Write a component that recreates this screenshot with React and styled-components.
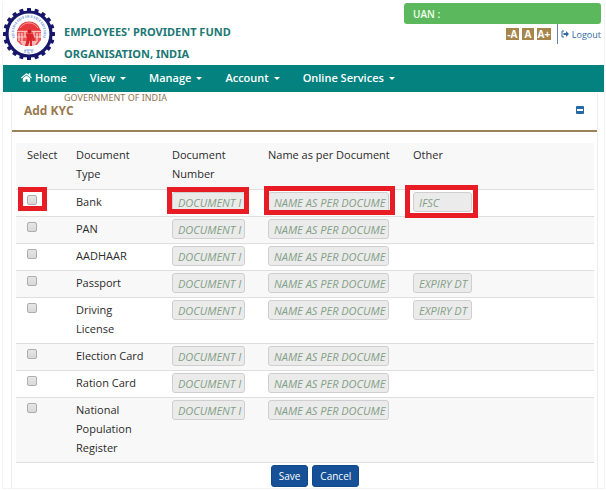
import React from "react";
import styled, { createGlobalStyle, css } from "styled-components";
import { FaHome } from "react-icons/fa";

const GlobalStyle = createGlobalStyle`
  * { box-sizing: border-box; }
  body {
    margin: 0;
    background: #fff;
    color: #2b2b2b;
    font-family: "Open Sans", "Noto Sans", sans-serif;
    font-size: 11px;
    line-height: 19px;
  }
  input, button { font-family: inherit; }
`;

const Page = styled.div`
  margin: 2px 1px 2px 2px;
  border: 1px solid #f3f3f3;
  border-top: 0;
`;

const Header = styled.header`
  display: flex;
  justify-content: space-between;
  height: 63px;
`;

const Brand = styled.div`
  display: flex;
  gap: 9px;
`;

const Emblem = styled.svg`
  width: 52px;
  height: 54px;
  margin-top: 5px;
`;

const BrandName = styled.h1`
  margin: 19px 0 0;
  width: 190px;
  color: #1c7874;
  font-family: "Noto Sans", sans-serif;
  font-size: 11px;
  font-weight: 700;
  line-height: 22px;
`;

const Session = styled.div`
  display: flex;
  flex-direction: column;
  width: 197px;
  margin: 1px 3px 0 0;
`;

const Uan = styled.div`
  height: 21px;
  padding: 0 9px;
  border-radius: 3px;
  background: #5cb85c;
  color: #f4fff0;
  font-size: 10px;
  font-weight: 600;
  line-height: 23px;
`;

const Tools = styled.div`
  display: flex;
  justify-content: flex-end;
  align-items: center;
  gap: 3px;
  height: 20px;
`;

const SizeButton = styled.button`
  width: ${(p) => p.$width}px;
  height: 12px;
  padding: 0;
  border: 0;
  background: #a5854c;
  color: #fff;
  font-size: 10px;
  font-weight: 700;
  line-height: 12px;
`;

const Logout = styled.a`
  display: flex;
  align-items: center;
  gap: 3px;
  height: 20px;
  margin-left: 3px;
  padding-left: 3px;
  border-left: 1px solid #6c7fae;
  color: #31699f;
  font-size: 9px;
  text-decoration: none;
`;

const Nav = styled.nav`
  display: flex;
  gap: 23px;
  height: 27px;
  padding: 0 18px;
  background: #04827f;
`;

const NavLink = styled.a`
  display: flex;
  align-items: center;
  gap: ${(p) => (p.$menu ? 5 : 3)}px;
  height: 24px;
  color: #fff;
  font-size: 11px;
  font-weight: 600;
  text-decoration: none;
`;

const Caret = styled.span`
  margin-top: 3px;
  border: 3px solid transparent;
  border-top-color: #fff;
  border-bottom: 0;
`;

const Panel = styled.section`
  margin: 1px 6px 0 8px;
  padding-bottom: 1px;
  border: solid #ececec;
  border-width: 0 1px;
`;

const Government = styled.p`
  margin: 0 0 0 52px;
  color: #8f7452;
  font-family: "Noto Sans", sans-serif;
  font-size: 9px;
  line-height: 10px;
`;

const PanelHead = styled.div`
  display: flex;
  justify-content: space-between;
  height: 29px;
  padding: 0 13px 0 12px;
  border-bottom: 2px solid #9c8258;
`;

const PanelTitle = styled.h2`
  margin: 0;
  color: #9a7a50;
  font-size: 12px;
  font-weight: 700;
  line-height: 16px;
`;

const Collapse = styled.button`
  width: 8px;
  height: 8px;
  margin-top: 3px;
  padding: 3px 1px;
  border: 0;
  border-radius: 1px;
  background: linear-gradient(#fff, #fff) content-box, #2568a6;
`;

const Form = styled.form`
  position: relative;
  padding: 11px 3px 0 4px;
`;

const Table = styled.table`
  width: 100%;
  border-collapse: collapse;
  table-layout: fixed;
`;

const Column = styled.col`
  width: ${(p) => p.$width}px;
`;

const Row = styled.tr`
  border-bottom: 1px solid #dedede;
  &:nth-child(even), thead & { background: #f8f8f8; }
`;

const cell = css`
  padding: 2px 8px 5px 11px;
  font-weight: 500;
  text-align: left;
  vertical-align: top;
`;

const HeadCell = styled.th`
  ${cell}
  padding-bottom: 6px;
`;

const Cell = styled.td`
  ${cell}
`;

const FieldCell = styled(Cell)`
  padding-bottom: 4px;
  line-height: 0;
`;

const Check = styled.input`
  appearance: none;
  display: block;
  width: 10px;
  height: 10px;
  margin: 3px 0 0;
  border: 1px solid #adadad;
  border-radius: 2px;
  background: linear-gradient(#e6e6e6, #d8d8d8);
`;

const Field = styled.input`
  width: ${(p) => p.$width}px;
  height: 20px;
  padding: 0 1px 0 5px;
  border: 1px solid #cfcfcf;
  border-radius: 3px;
  background: #ebebeb;
  font-size: 11px;
  &::placeholder { color: #83a087; font-style: italic; opacity: 1; }
`;

const Actions = styled.div`
  display: flex;
  justify-content: center;
  gap: 4px;
  padding: 2px 0 0 20px;
`;

const Button = styled.button`
  height: 22px;
  padding: 0 7px;
  border: 1px solid #12498a;
  border-radius: 3px;
  background: #165096;
  color: #fff;
  font-size: 10px;
  font-weight: 500;
`;

const Highlight = styled.div`
  position: absolute;
  left: ${(p) => p.$x}px;
  top: ${(p) => p.$y}px;
  width: ${(p) => p.$w}px;
  height: ${(p) => p.$h}px;
  border: 5px solid #e81c24;
  pointer-events: none;
`;

const menus = ["View", "Manage", "Account", "Online Services"];

const documents = [
  { name: "Bank", other: "IFSC" },
  { name: "PAN" },
  { name: "AADHAAR" },
  { name: "Passport", other: "EXPIRY DT" },
  { name: "Driving License", other: "EXPIRY DT" },
  { name: "Election Card" },
  { name: "Ration Card" },
  { name: "National Population Register" },
];

const highlights = [
  { x: 6, y: 55, w: 29, h: 24 },
  { x: 155, y: 55, w: 82, h: 27 },
  { x: 252, y: 54, w: 131, h: 29 },
  { x: 393, y: 53, w: 73, h: 33 },
];

function Logo() {
  return (
    <Emblem viewBox="0 0 52 54" role="img" aria-label="EPFO emblem">
      <g fill="#16166b">
        {Array.from({ length: 20 }, (_, i) => (
          <rect key={i} x="24" y="1" width="4" height="5" rx="0.6" transform={`rotate(${i * 18} 26 27)`} />
        ))}
      </g>
      <circle cx="26" cy="27" r="22" fill="#fdfdff" stroke="#16166b" strokeWidth="3.2" />
      <path d="M11 31A16 16 0 1 1 41 31" fill="none" stroke="#a3bae4" strokeWidth="2.6" strokeDasharray="1.2 .7 2 .6 .8 .8 1.5 1.3" />
      <path d="M22 43v3M21.500 43h9M25 43.500v2.500h2M29 43v3" fill="none" stroke="#769be0" strokeWidth=".9" />
      <path d="M14.500 23A12 12 0 0 1 37.500 23Z" fill="#e83a3d" />
      <path d="M14 23h24v10l-4 5H18l-4-4z" fill="#ef5556" />
      <path d="M17 21c3-4 6-5 9-5s6 1 9 5" fill="none" stroke="#f7a7a5" />
      <path d="M14 24.500h24M14 30h24" stroke="#ffd9d5" strokeWidth=".8" />
      <path d="M16 26v8M19 26v9M22 25v5M31 25v5M34 26v8M37 26v5" stroke="#fff0ed" strokeWidth="1" />
      <path d="M17 34h18l-4 5H20z" fill="#f7b9b7" />
      <circle cx="26.500" cy="24.500" r="2" fill="#c91b22" />
      <path d="M23 27h7l2 6-2 1-1-3v8h-2v-6l-2 6h-3l2-8z" fill="#db252b" />
    </Emblem>
  );
}

function LogoutIcon() {
  return (
    <svg width="8" height="8" viewBox="0 0 8 8" aria-hidden="true">
      <path d="M3 1H1v6h2" fill="none" stroke="#31699f" strokeWidth="1" />
      <path d="M2.500 3H5V1l3 3-3 3V5H2.500z" fill="#31699f" />
    </svg>
  );
}

export default function App() {
  return (
    <>
      <GlobalStyle />
      <Page>
        <Header>
          <Brand>
            <Logo />
            <BrandName>EMPLOYEES' PROVIDENT FUND ORGANISATION, INDIA</BrandName>
          </Brand>
          <Session>
            <Uan>UAN :</Uan>
            <Tools>
              <SizeButton type="button" $width={13}>-A</SizeButton>
              <SizeButton type="button" $width={12}>A</SizeButton>
              <SizeButton type="button" $width={14}>A+</SizeButton>
              <Logout href="#logout"><LogoutIcon />Logout</Logout>
            </Tools>
          </Session>
        </Header>
        <Nav>
          <NavLink href="#home"><FaHome size={11} />Home</NavLink>
          {menus.map((menu) => (
            <NavLink key={menu} href="#menu" $menu>{menu}<Caret /></NavLink>
          ))}
        </Nav>
        <Panel>
          <Government>GOVERNMENT OF INDIA</Government>
          <PanelHead>
            <PanelTitle>Add KYC</PanelTitle>
            <Collapse type="button" aria-label="Collapse" />
          </PanelHead>
          <Form>
            <Table>
              <colgroup>
                <Column $width={49} />
                <Column $width={96} />
                <Column $width={96} />
                <Column $width={145} />
                <col />
              </colgroup>
              <thead>
                <Row>
                  <HeadCell>Select</HeadCell>
                  <HeadCell>Document Type</HeadCell>
                  <HeadCell>Document Number</HeadCell>
                  <HeadCell>Name as per Document</HeadCell>
                  <HeadCell>Other</HeadCell>
                </Row>
              </thead>
              <tbody>
                {documents.map(({ name, other }) => (
                  <Row key={name}>
                    <Cell><Check type="checkbox" aria-label={`Select ${name}`} /></Cell>
                    <Cell>{name}</Cell>
                    <FieldCell><Field $width={73} disabled placeholder="DOCUMENT I" aria-label={`${name} document number`} /></FieldCell>
                    <FieldCell><Field $width={121} disabled placeholder="NAME AS PER DOCUME" aria-label={`Name as per ${name}`} /></FieldCell>
                    <FieldCell>{other && <Field $width={59} disabled placeholder={other} aria-label={`${name} ${other}`} />}</FieldCell>
                  </Row>
                ))}
              </tbody>
            </Table>
            <Actions>
              <Button type="button">Save</Button>
              <Button type="button">Cancel</Button>
            </Actions>
            {highlights.map(({ x, y, w, h }) => (
              <Highlight key={x} $x={x} $y={y} $w={w} $h={h} />
            ))}
          </Form>
        </Panel>
      </Page>
    </>
  );
}
